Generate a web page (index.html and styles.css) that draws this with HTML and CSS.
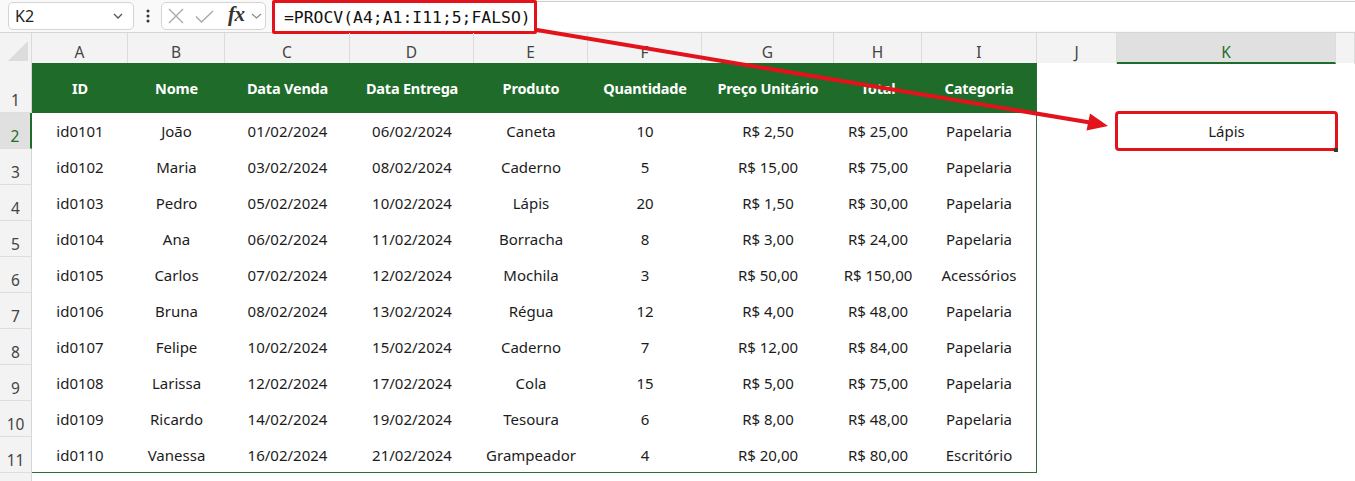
FILE: index.html
```html
<!DOCTYPE html>
<html lang="pt-BR">
<head>
<meta charset="utf-8">
<title>PROCV</title>
<link rel="stylesheet" href="styles.css">
</head>
<body>
<div class="app">
  <div class="formula-bar">
    <div class="name-box">
      <span class="name-text">K2</span>
      <svg class="chev" width="10" height="6" viewBox="0 0 10 6"><polyline points="1,1 5,5 9,1" fill="none" stroke="#555" stroke-width="1.3"/></svg>
    </div>
    <div class="dots">
      <svg width="4" height="14" viewBox="0 0 4 14"><circle cx="2" cy="2" r="1.5" fill="#333"/><circle cx="2" cy="7" r="1.5" fill="#333"/><circle cx="2" cy="12" r="1.5" fill="#333"/></svg>
    </div>
    <div class="fn-box">
      <svg class="ico-x" width="16" height="16" viewBox="0 0 16 16"><path d="M1 1 L15 15 M15 1 L1 15" stroke="#a9a9a9" stroke-width="1.4" fill="none"/></svg>
      <svg class="ico-check" width="19" height="13" viewBox="0 0 19 13"><polyline points="1,6.5 6.5,12 18,1" fill="none" stroke="#a9a9a9" stroke-width="1.4"/></svg>
      <span class="fx">fx</span>
      <svg class="chev-sm" width="11" height="6" viewBox="0 0 11 6"><polyline points="1,1 5.5,5 10,1" fill="none" stroke="#888" stroke-width="1.2"/></svg>
    </div>
    <div class="formula-input">
      <span class="formula-text">=PROCV(A4;A1:I11;5;FALSO)</span>
    </div>
  </div>

  <div class="sheet">
    <div class="row col-headers">
      <div class="corner"><span class="tri"></span></div>
      <div class="ch">A</div><div class="ch">B</div><div class="ch">C</div><div class="ch">D</div><div class="ch">E</div><div class="ch">F</div><div class="ch">G</div><div class="ch">H</div><div class="ch">I</div><div class="ch">J</div><div class="ch ch-sel">K</div><div class="ch"></div>
    </div>

    <div class="row r-head">
      <div class="rh">1</div>
      <div class="c th">ID</div><div class="c th">Nome</div><div class="c th">Data Venda</div><div class="c th">Data Entrega</div><div class="c th">Produto</div><div class="c th">Quantidade</div><div class="c th">Preço Unitário</div><div class="c th">Total</div><div class="c th last">Categoria</div><div class="c"></div><div class="c"></div><div class="c"></div>
    </div>

    <div class="row">
      <div class="rh rh-sel">2</div>
      <div class="c">id0101</div><div class="c">João</div><div class="c">01/02/2024</div><div class="c">06/02/2024</div><div class="c">Caneta</div><div class="c">10</div><div class="c">R$ 2,50</div><div class="c">R$ 25,00</div><div class="c last">Papelaria</div><div class="c"></div><div class="c sel">Lápis<span class="handle"></span></div><div class="c"></div>
    </div>
    <div class="row">
      <div class="rh">3</div>
      <div class="c">id0102</div><div class="c">Maria</div><div class="c">03/02/2024</div><div class="c">08/02/2024</div><div class="c">Caderno</div><div class="c">5</div><div class="c">R$ 15,00</div><div class="c">R$ 75,00</div><div class="c last">Papelaria</div><div class="c"></div><div class="c"></div><div class="c"></div>
    </div>
    <div class="row">
      <div class="rh">4</div>
      <div class="c">id0103</div><div class="c">Pedro</div><div class="c">05/02/2024</div><div class="c">10/02/2024</div><div class="c">Lápis</div><div class="c">20</div><div class="c">R$ 1,50</div><div class="c">R$ 30,00</div><div class="c last">Papelaria</div><div class="c"></div><div class="c"></div><div class="c"></div>
    </div>
    <div class="row">
      <div class="rh">5</div>
      <div class="c">id0104</div><div class="c">Ana</div><div class="c">06/02/2024</div><div class="c">11/02/2024</div><div class="c">Borracha</div><div class="c">8</div><div class="c">R$ 3,00</div><div class="c">R$ 24,00</div><div class="c last">Papelaria</div><div class="c"></div><div class="c"></div><div class="c"></div>
    </div>
    <div class="row">
      <div class="rh">6</div>
      <div class="c">id0105</div><div class="c">Carlos</div><div class="c">07/02/2024</div><div class="c">12/02/2024</div><div class="c">Mochila</div><div class="c">3</div><div class="c">R$ 50,00</div><div class="c">R$ 150,00</div><div class="c last">Acessórios</div><div class="c"></div><div class="c"></div><div class="c"></div>
    </div>
    <div class="row">
      <div class="rh">7</div>
      <div class="c">id0106</div><div class="c">Bruna</div><div class="c">08/02/2024</div><div class="c">13/02/2024</div><div class="c">Régua</div><div class="c">12</div><div class="c">R$ 4,00</div><div class="c">R$ 48,00</div><div class="c last">Papelaria</div><div class="c"></div><div class="c"></div><div class="c"></div>
    </div>
    <div class="row">
      <div class="rh">8</div>
      <div class="c">id0107</div><div class="c">Felipe</div><div class="c">10/02/2024</div><div class="c">15/02/2024</div><div class="c">Caderno</div><div class="c">7</div><div class="c">R$ 12,00</div><div class="c">R$ 84,00</div><div class="c last">Papelaria</div><div class="c"></div><div class="c"></div><div class="c"></div>
    </div>
    <div class="row">
      <div class="rh">9</div>
      <div class="c">id0108</div><div class="c">Larissa</div><div class="c">12/02/2024</div><div class="c">17/02/2024</div><div class="c">Cola</div><div class="c">15</div><div class="c">R$ 5,00</div><div class="c">R$ 75,00</div><div class="c last">Papelaria</div><div class="c"></div><div class="c"></div><div class="c"></div>
    </div>
    <div class="row">
      <div class="rh">10</div>
      <div class="c">id0109</div><div class="c">Ricardo</div><div class="c">14/02/2024</div><div class="c">19/02/2024</div><div class="c">Tesoura</div><div class="c">6</div><div class="c">R$ 8,00</div><div class="c">R$ 48,00</div><div class="c last">Papelaria</div><div class="c"></div><div class="c"></div><div class="c"></div>
    </div>
    <div class="row r-bottom">
      <div class="rh">11</div>
      <div class="c">id0110</div><div class="c">Vanessa</div><div class="c">16/02/2024</div><div class="c">21/02/2024</div><div class="c">Grampeador</div><div class="c">4</div><div class="c">R$ 20,00</div><div class="c">R$ 80,00</div><div class="c last">Escritório</div><div class="c"></div><div class="c"></div><div class="c"></div>
    </div>
    <div class="row">
      <div class="rh"></div>
      <div class="c"></div><div class="c"></div><div class="c"></div><div class="c"></div><div class="c"></div><div class="c"></div><div class="c"></div><div class="c"></div><div class="c"></div><div class="c"></div><div class="c"></div><div class="c"></div>
    </div>
  </div>

  <svg class="arrow" width="1355" height="481" viewBox="0 0 1355 481">
    <line x1="537" y1="30" x2="1090" y2="122.5" stroke="#e3131b" stroke-width="4" stroke-linecap="round"/>
    <polygon points="1108,126 1086.5,130.5 1090,113.5" fill="#e3131b"/>
  </svg>
</div>
</body>
</html>
```

FILE: styles.css
```css
* {
  box-sizing: border-box;
}

html, body {
  margin: 0;
  padding: 0;
}

body {
  width: 1355px;
  height: 481px;
  overflow: hidden;
  background: #ffffff;
  font-family: "Noto Sans", "Open Sans", sans-serif;
  color: #1c1c1c;
}

.app {
  position: relative;
  width: 1355px;
  height: 481px;
  overflow: hidden;
}

/* ---------- formula bar ---------- */
.formula-bar {
  height: 33px;
  display: flex;
  align-items: center;
  padding-left: 8px;
  background: #f9f9f9;
  border-bottom: 1px solid #d6d6d6;
}

.name-box {
  width: 126px;
  height: 28px;
  background: #ffffff;
  border: 1px solid #d4d4d4;
  border-radius: 5px;
  display: flex;
  align-items: center;
  justify-content: space-between;
  padding: 0 10px 0 6px;
}

.name-text {
  font-size: 16px;
  color: #222;
}

.dots {
  width: 27px;
  display: flex;
  justify-content: center;
  align-items: center;
}

.dots svg {
  display: block;
}

.fn-box {
  width: 105px;
  height: 28px;
  background: #ffffff;
  border: 1px solid #d4d4d4;
  border-radius: 5px;
  display: flex;
  align-items: center;
  padding-left: 6px;
}

.ico-x {
  margin-right: 11px;
}

.ico-check {
  margin-right: 14px;
}

.fx {
  font-family: "Liberation Serif", "DejaVu Serif", serif;
  font-style: italic;
  font-weight: 700;
  font-size: 21px;
  color: #333;
  line-height: 1;
  margin-top: -3px;
  margin-right: 6px;
  letter-spacing: -0.5px;
}

.formula-input {
  flex: 1;
  height: 30px;
  margin-left: 7px;
  background: #ffffff;
  border-top: 1px solid #d0d0d0;
  display: flex;
  align-items: center;
}

.formula-text {
  display: inline-flex;
  align-items: center;
  height: 34px;
  margin-top: 1px;
  margin-left: -1px;
  padding: 0 3px 0 9px;
  border: 3px solid #e3131b;
  border-radius: 2px;
  background: #ffffff;
  font-family: "DejaVu Sans Mono", "Liberation Mono", monospace;
  font-size: 16.4px;
  color: #111;
}

/* ---------- sheet ---------- */
.sheet {
  --cols: 32px 96px 97px 125px 124px 114px 114px 132px 88px 115px 80px 219px 1fr;
}

.row {
  display: grid;
  grid-template-columns: var(--cols);
  height: 36px;
}

.col-headers {
  height: 30px;
  background: #f3f3f3;
}

.corner {
  position: relative;
  border-right: 1px solid #dadada;
}

.tri {
  position: absolute;
  right: 3px;
  bottom: 3px;
  width: 0;
  height: 0;
  border-left: 20px solid transparent;
  border-bottom: 20px solid #dcdcdc;
}

.ch {
  border-right: 1px solid #dcdcdc;
  text-align: center;
  font-size: 15.5px;
  line-height: 20px;
  padding-top: 9px;
  color: #444;
}

.ch-sel {
  background: #e0e0e0;
  color: #1e6b2a;
  border-bottom: 2px solid #1e6b2a;
}

.rh {
  background: #f3f3f3;
  border-right: 1px solid #d6d6d6;
  border-bottom: 1px solid #dedede;
  display: flex;
  align-items: flex-end;
  justify-content: center;
  font-size: 15.5px;
  line-height: 18px;
  padding-bottom: 3px;
  color: #444;
}

.rh-sel {
  background: #e0e0e0;
  color: #1e6b2a;
  border-right: 2px solid #1e6b2a;
}

.r-head {
  height: 50px;
}

.c {
  position: relative;
  display: flex;
  align-items: center;
  justify-content: center;
  font-size: 15px;
  color: #1c1c1c;
  white-space: nowrap;
}

.th {
  background: #1e6b2a;
  color: #ffffff;
  font-weight: 700;
  font-size: 14.5px;
  letter-spacing: -0.2px;
}

.last {
  border-right: 1px solid #2b6e33;
}

.r-bottom .c:nth-child(-n+10) {
  border-bottom: 1px solid #2b6e33;
}

.sel {
  outline: 3px solid #e3131b;
  outline-offset: -1px;
  border-radius: 2px;
}

.handle {
  position: absolute;
  right: -2px;
  bottom: -3px;
  width: 4px;
  height: 4px;
  background: #3b3b2b;
}

/* ---------- annotation arrow ---------- */
.arrow {
  position: absolute;
  left: 0;
  top: 0;
  pointer-events: none;
}
```
